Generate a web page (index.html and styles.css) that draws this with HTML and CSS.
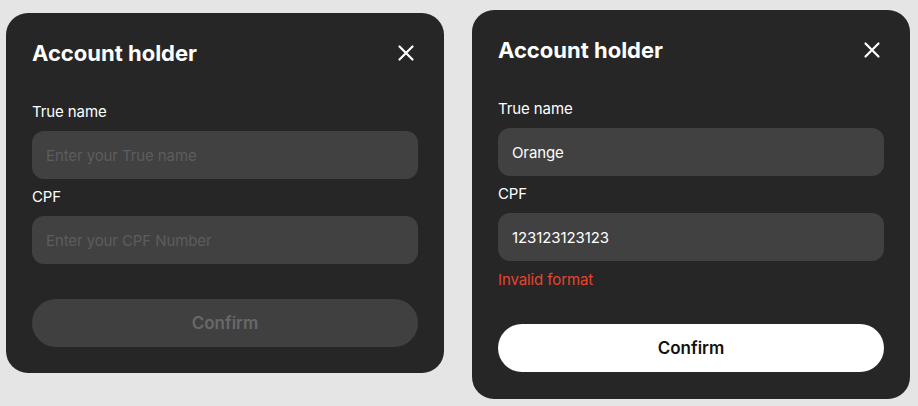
FILE: index.html
```html
<!DOCTYPE html>
<html lang="en">
<head>
  <meta charset="UTF-8">
  <meta name="viewport" content="width=device-width, initial-scale=1.0">
  <title>Account holder</title>
  <link rel="stylesheet" href="styles.css">
</head>
<body>

<div class="board">
  <!-- Empty state -->
  <div class="modal modal-empty">
    <div class="modal-header">
      <h2>Account holder</h2>
      <button class="close-button" aria-label="Close">
        <svg width="24" height="24" viewBox="0 0 24 24"><path d="M5.5 5.5 18.5 18.5M18.5 5.5 5.5 18.5" stroke="#fff" stroke-width="2.2" stroke-linecap="round"/></svg>
      </button>
    </div>
    <label class="field-label">True name</label>
    <input class="field-input" type="text" placeholder="Enter your True name">
    <label class="field-label">CPF</label>
    <input class="field-input" type="text" placeholder="Enter your CPF Number">
    <button class="confirm-button" disabled>Confirm</button>
  </div>

  <!-- Filled state with error -->
  <div class="modal modal-filled">
    <div class="modal-header">
      <h2>Account holder</h2>
      <button class="close-button" aria-label="Close">
        <svg width="24" height="24" viewBox="0 0 24 24"><path d="M5.5 5.5 18.5 18.5M18.5 5.5 5.5 18.5" stroke="#fff" stroke-width="2.2" stroke-linecap="round"/></svg>
      </button>
    </div>
    <label class="field-label">True name</label>
    <input class="field-input" type="text" value="Orange">
    <label class="field-label">CPF</label>
    <input class="field-input" type="text" value="123123123123">
    <p class="field-error">Invalid format</p>
    <button class="confirm-button">Confirm</button>
  </div>
</div>

</body>
</html>
```

FILE: styles.css
```css
/* Page */
body {
  font-family: Inter, "Noto Sans", sans-serif;
  background-color: #e5e5e5;
  margin: 0;
  padding: 0;
  color: #fff;
}
.board {
  display: flex;
  align-items: flex-start;
  gap: 28px;
  padding: 10px 0 0 6px;
}

/* Modal card */
.modal {
  width: 438px;
  box-sizing: border-box;
  background-color: #262626;
  border-radius: 22px;
  padding: 26px;
  display: flex;
  flex-direction: column;
}
.modal-empty {
  margin-top: 3px;
}
.modal-filled {
  padding-bottom: 27px;
}
.modal-header {
  display: flex;
  align-items: center;
  justify-content: space-between;
  height: 28px;
  margin-bottom: 35px;
}
.modal-header h2 {
  margin: 0;
  font-size: 22px;
  font-weight: 700;
  line-height: 28px;
}
.close-button {
  width: 24px;
  height: 24px;
  padding: 0;
  border: none;
  background: none;
  cursor: pointer;
  display: flex;
}

/* Fields */
.field-label {
  font-size: 15px;
  line-height: 20px;
  margin-bottom: 9px;
  letter-spacing: -0.1px;
}
.field-input {
  height: 48px;
  box-sizing: border-box;
  border: none;
  border-radius: 12px;
  background-color: #414141;
  color: #fff;
  font-family: inherit;
  font-size: 15px;
  padding: 0 14px;
  margin: 0 0 8px;
  outline: none;
  letter-spacing: -0.1px;
}
.field-input::placeholder {
  color: #5d5d5d;
}
.field-error {
  margin: 1px 0 7px;
  font-size: 15px;
  line-height: 20px;
  color: #e8442f;
  letter-spacing: -0.1px;
}

/* Confirm */
.confirm-button {
  margin-top: 27px;
  height: 48px;
  border: none;
  border-radius: 24px;
  background-color: #fff;
  color: #111;
  font-family: inherit;
  font-size: 17px;
  font-weight: 600;
  cursor: pointer;
}
.confirm-button:disabled {
  background-color: #404040;
  color: #686868;
  cursor: default;
}
```
